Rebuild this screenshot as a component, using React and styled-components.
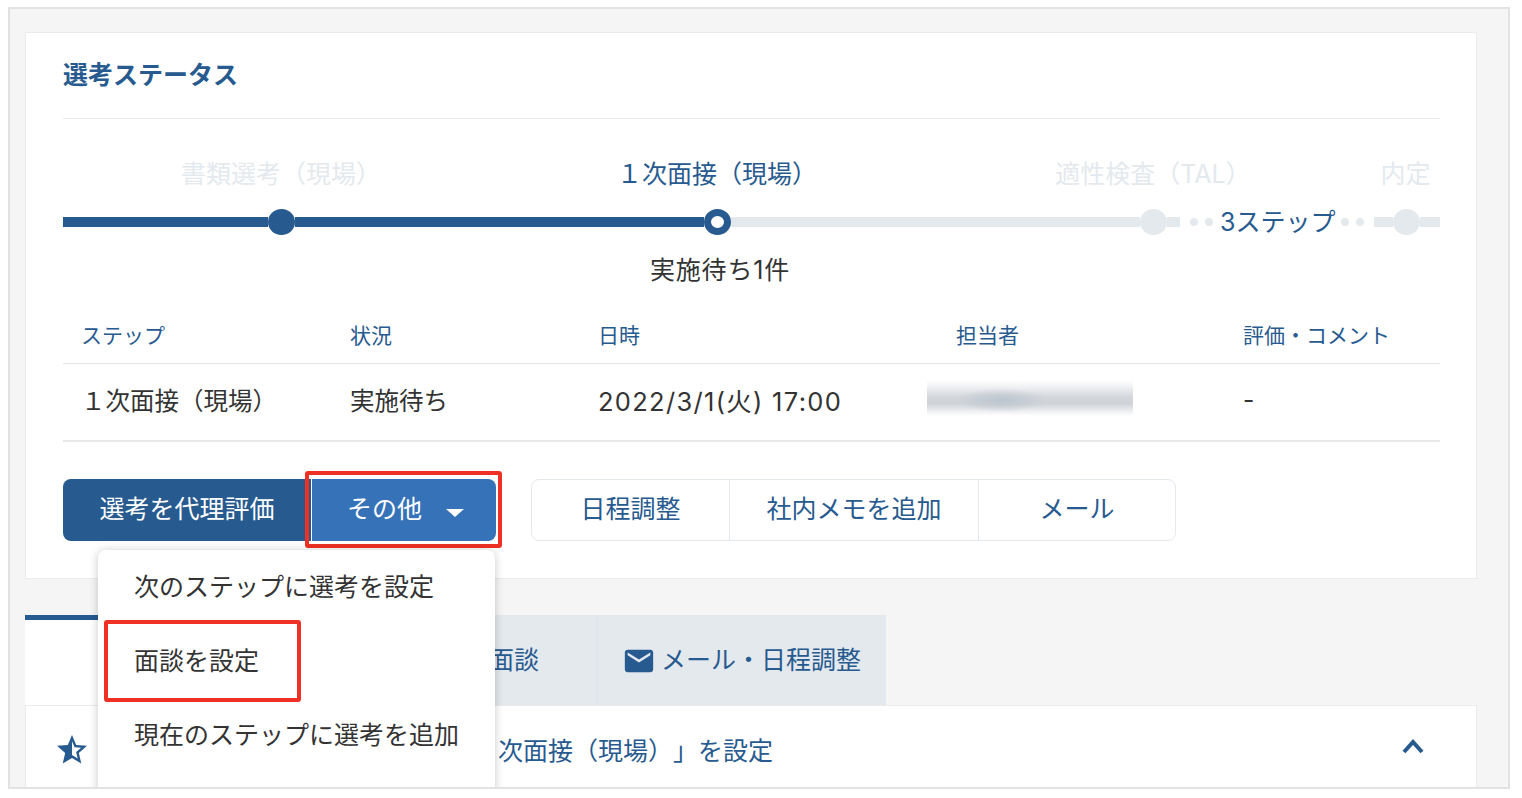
import React from 'react';
import styled, { createGlobalStyle } from 'styled-components';

const navy = '#275a8f';
const pale = '#e4e9ee';

const GlobalStyle = createGlobalStyle`
  html, body {
    margin: 0;
    background: #fff;
    font-family: Inter, "Noto Sans CJK JP", "Noto Sans", sans-serif;
    color: #333;
    text-spacing-trim: space-all;
  }
`;

const Frame = styled.div`
  box-sizing: border-box;
  width: 1502px;
  height: 782px;
  margin: 7px 0 0 8px;
  padding: 23px 31px 0 15px;
  background: #f5f5f5;
  border: 2px solid #e2e2e2;
  overflow: hidden;
`;

const Card = styled.section`
  background: #fff;
  border: 1px solid #ebebeb;
  padding: 0 36px 37px 37px;
`;

const Title = styled.h2`
  margin: 0;
  height: 86px;
  display: flex;
  align-items: center;
  padding-bottom: 5px;
  box-sizing: border-box;
  border-bottom: 1px solid #e8e8e8;
  font-size: 25px;
  font-weight: 700;
  color: ${navy};
`;

const Stepper = styled.div`
  display: grid;
  grid-template-columns: 436px 436px 436px 1fr;
  margin-top: 37px;
  font-size: 25px;
  line-height: 36px;
`;

const StepLabel = styled.div`
  text-align: center;
  white-space: nowrap;
  color: ${(p) => (p.$active ? navy : pale)};
`;

const Track = styled.div`
  grid-column: 1 / -1;
  display: flex;
  align-items: center;
  height: 26px;
  margin: 17px 0;
`;

const Bar = styled.div`
  width: ${(p) => p.$w}px;
  height: 10px;
  margin-left: ${(p) => p.$gap || 0}px;
  background: ${(p) => (p.$done ? navy : pale)};
`;

const Dot = styled.div`
  box-sizing: border-box;
  width: 27px;
  height: 26px;
  border-radius: 50%;
  background: ${(p) => (p.$done ? navy : pale)};
`;

const CurrentDot = styled(Dot)`
  background: #fff;
  border: 7px solid ${navy};
`;

const Pip = styled.span`
  width: 8px;
  height: 8px;
  border-radius: 50%;
  background: ${pale};
  margin-left: ${(p) => p.$gap}px;
`;

const Skipped = styled.span`
  margin-left: 7px;
  width: 121px;
  font-size: 25px;
  color: ${navy};
  white-space: nowrap;
`;

const Pending = styled.div`
  grid-column: 2;
  text-align: center;
  padding-left: 6px;
  letter-spacing: 0.8px;
  white-space: nowrap;
  color: #333;
`;

const HeadRow = styled.div`
  display: grid;
  grid-template-columns: 287px 248px 358px 287px 1fr;
  height: 76px;
  padding-top: 33px;
  box-sizing: border-box;
  border-bottom: 1px solid #e4e4e4;
  font-size: 21px;
  line-height: 30px;
  color: ${navy};
`;

const HeadCell = styled.div`
  padding-left: ${(p) => p.$pad || 0}px;
`;

const BodyRow = styled.div`
  display: grid;
  grid-template-columns: 287px 248px 358px 287px 1fr;
  align-items: center;
  height: 78px;
  padding-bottom: 5px;
  border-bottom: 2px solid #e8e8e8;
  box-sizing: border-box;
  font-size: 24.5px;
`;

const BodyCell = styled.div`
  margin-left: ${(p) => p.$pad || 0}px;
  white-space: nowrap;
`;

const DateCell = styled(BodyCell)`
  font-size: 25.5px;
  letter-spacing: 1.3px;
`;

const BlurredName = styled.div`
  width: 206px;
  height: 36px;
  margin: 0 0 4px -29px;
  background:
    radial-gradient(ellipse 44px 12px at 36% 56%, #bcc5ce, rgba(188, 197, 206, 0)),
    linear-gradient(to bottom, #fff, #f1f2f4 18%, #d3d6db 48%, #cfd3d8 66%, #eceef0 86%, #fff);
`;

const Actions = styled.div`
  display: flex;
  align-items: stretch;
  margin-top: 37px;
  height: 62px;
`;

const Split = styled.div`
  position: relative;
  display: flex;
  width: 433px;
  margin-right: 35px;
`;

const PrimaryButton = styled.button`
  width: 248px;
  border: 0;
  padding: 0 0 6px;
  font: inherit;
  font-size: 25px;
  color: #fff;
  background: ${navy};
  border-radius: 8px 0 0 8px;
`;

const MoreButton = styled.button`
  position: relative;
  flex: 1;
  display: flex;
  align-items: center;
  justify-content: center;
  gap: 24px;
  border: 0;
  border-left: 1px solid #fff;
  padding: 0 0 6px 3px;
  font: inherit;
  font-size: 25px;
  color: #fff;
  background: #3672b7;
  border-radius: 0 8px 8px 0;
`;

const Caret = styled.span`
  width: 0;
  height: 0;
  margin-top: 11px;
  border-left: 9px solid transparent;
  border-right: 9px solid transparent;
  border-top: 8px solid #fff;
`;

const Highlight = styled.div`
  position: absolute;
  box-sizing: border-box;
  border: 4px solid #ee3124;
  border-radius: 3px;
  pointer-events: none;
  left: ${(p) => p.$left}px;
  top: ${(p) => p.$top}px;
  width: ${(p) => p.$w}px;
  height: ${(p) => p.$h}px;
`;

const Menu = styled.ul`
  position: absolute;
  z-index: 2;
  top: 71px;
  left: 35px;
  width: 397px;
  margin: 0;
  padding: 0;
  list-style: none;
  background: #fff;
  border-radius: 8px;
  box-shadow: 0 1px 10px rgba(0, 0, 0, 0.22);
`;

const MenuItem = styled.li`
  position: relative;
  box-sizing: border-box;
  height: 74px;
  display: flex;
  align-items: center;
  padding: 0 0 4px 36px;
  font-size: 25px;
  color: #333;
  white-space: nowrap;
`;

const GhostGroup = styled.div`
  display: flex;
  border: 1px solid ${pale};
  border-radius: 8px;
`;

const GhostButton = styled.button`
  width: ${(p) => p.$w}px;
  border: 0;
  border-left: ${(p) => (p.$first ? 0 : `1px solid ${pale}`)};
  background: transparent;
  padding: 0 0 6px;
  font: inherit;
  font-size: 25px;
  color: ${navy};
`;

const Tabs = styled.div`
  display: flex;
  height: 90px;
  margin-top: 36px;
`;

const Tab = styled.div`
  box-sizing: border-box;
  display: flex;
  align-items: center;
  gap: 8px;
  height: 90px;
  padding: 0 ${(p) => p.$padR || 25}px 4px ${(p) => p.$padL || 27}px;
  width: ${(p) => (p.$w ? `${p.$w}px` : 'auto')};
  justify-content: ${(p) => (p.$end ? 'flex-end' : 'flex-start')};
  font-size: 25px;
  color: ${navy};
  white-space: nowrap;
  background: ${(p) => (p.$active ? '#fff' : pale)};
  border-top: ${(p) => (p.$active ? `5px solid ${navy}` : 0)};
  border-left: ${(p) => (p.$divided ? '1px solid #dfe5ea' : 0)};
`;

const Panel = styled.div`
  display: flex;
  align-items: center;
  box-sizing: border-box;
  height: 92px;
  padding: 0 51px 5px 28px;
  background: #fff;
  border: 1px solid #ebebeb;
  font-size: 25px;
  color: ${navy};
`;

const PanelTitle = styled.div`
  flex: 1;
  padding-left: 358px;
  white-space: nowrap;
`;

const StarSvg = styled.svg`
  flex: none;
  margin-top: 2px;
  fill: ${navy};
`;

const MailSvg = styled.svg`
  flex: none;
  margin: 6px -3px 0;
  fill: ${navy};
`;

const ChevronSvg = styled.svg`
  flex: none;
  margin-top: -6px;
  fill: none;
  stroke: ${navy};
  stroke-width: 4;
`;

const StarIcon = () => (
  <StarSvg width="36" height="36" viewBox="0 0 24 24" aria-hidden="true">
    <path d="M22 9.24l-7.19-.62L12 2 9.19 8.63 2 9.24l5.46 4.73L5.82 21 12 17.27 18.18 21l-1.63-7.03L22 9.24zM12 15.4V6.1l1.71 4.04 4.38.38-3.32 2.88 1 4.28L12 15.4z" />
  </StarSvg>
);

const MailIcon = () => (
  <MailSvg width="34" height="34" viewBox="0 0 24 24" aria-hidden="true">
    <path d="M20 4H4c-1.1 0-1.99.9-1.99 2L2 18c0 1.1.9 2 2 2h16c1.1 0 2-.9 2-2V6c0-1.1-.9-2-2-2zm0 4l-8 5-8-5V6l8 5 8-5v2z" />
  </MailSvg>
);

const ChevronUp = () => (
  <ChevronSvg width="24" height="18" viewBox="0 0 24 18" aria-hidden="true">
    <path d="M3 15 L12 5 L21 15" />
  </ChevronSvg>
);

const columns = ['ステップ', '状況', '日時', '担当者', '評価・コメント'];

export default function App() {
  return (
    <>
      <GlobalStyle />
      <Frame>
        <Card>
          <Title>選考ステータス</Title>

          <Stepper>
            <StepLabel>書類選考（現場）</StepLabel>
            <StepLabel $active>１次面接（現場）</StepLabel>
            <StepLabel>適性検査（TAL）</StepLabel>
            <StepLabel>内定</StepLabel>
            <Track>
              <Bar $done $w={205} />
              <Dot $done />
              <Bar $done $w={409} />
              <CurrentDot />
              <Bar $w={409} />
              <Dot />
              <Bar $w={13} />
              <Pip $gap={10} />
              <Pip $gap={7} />
              <Skipped>3ステップ</Skipped>
              <Pip $gap={0} />
              <Pip $gap={7} />
              <Bar $w={19} $gap={10} />
              <Dot />
              <Bar $w={20} />
            </Track>
            <Pending>実施待ち1件</Pending>
          </Stepper>

          <HeadRow>
            {columns.map((c, i) => (
              <HeadCell key={c} $pad={i === 0 ? 18 : 0}>{c}</HeadCell>
            ))}
          </HeadRow>
          <BodyRow>
            <BodyCell $pad={18}>１次面接（現場）</BodyCell>
            <BodyCell>実施待ち</BodyCell>
            <DateCell>2022/3/1(火) 17:00</DateCell>
            <BlurredName />
            <BodyCell>-</BodyCell>
          </BodyRow>

          <Actions>
            <Split>
              <PrimaryButton>選考を代理評価</PrimaryButton>
              <MoreButton>
                その他
                <Caret />
                <Highlight $left={-7} $top={-8} $w={197} $h={77} />
              </MoreButton>
              <Menu>
                <MenuItem>次のステップに選考を設定</MenuItem>
                <MenuItem>
                  面談を設定
                  <Highlight $left={6} $top={-4} $w={197} $h={82} />
                </MenuItem>
                <MenuItem>現在のステップに選考を追加</MenuItem>
                <MenuItem />
              </Menu>
            </Split>
            <GhostGroup>
              <GhostButton $first $w={197}>日程調整</GhostButton>
              <GhostButton $w={249}>社内メモを追加</GhostButton>
              <GhostButton $w={197}>メール</GhostButton>
            </GhostGroup>
          </Actions>
        </Card>

        <Tabs>
          <Tab $active $w={300} $padL={71}>
            <StarIcon />
          </Tab>
          <Tab $w={272} $end $padR={58}>面談</Tab>
          <Tab $divided>
            <MailIcon />
            メール・日程調整
          </Tab>
        </Tabs>
        <Panel>
          <StarIcon />
          <PanelTitle>「１次面接（現場）」を設定</PanelTitle>
          <ChevronUp />
        </Panel>
      </Frame>
    </>
  );
}
